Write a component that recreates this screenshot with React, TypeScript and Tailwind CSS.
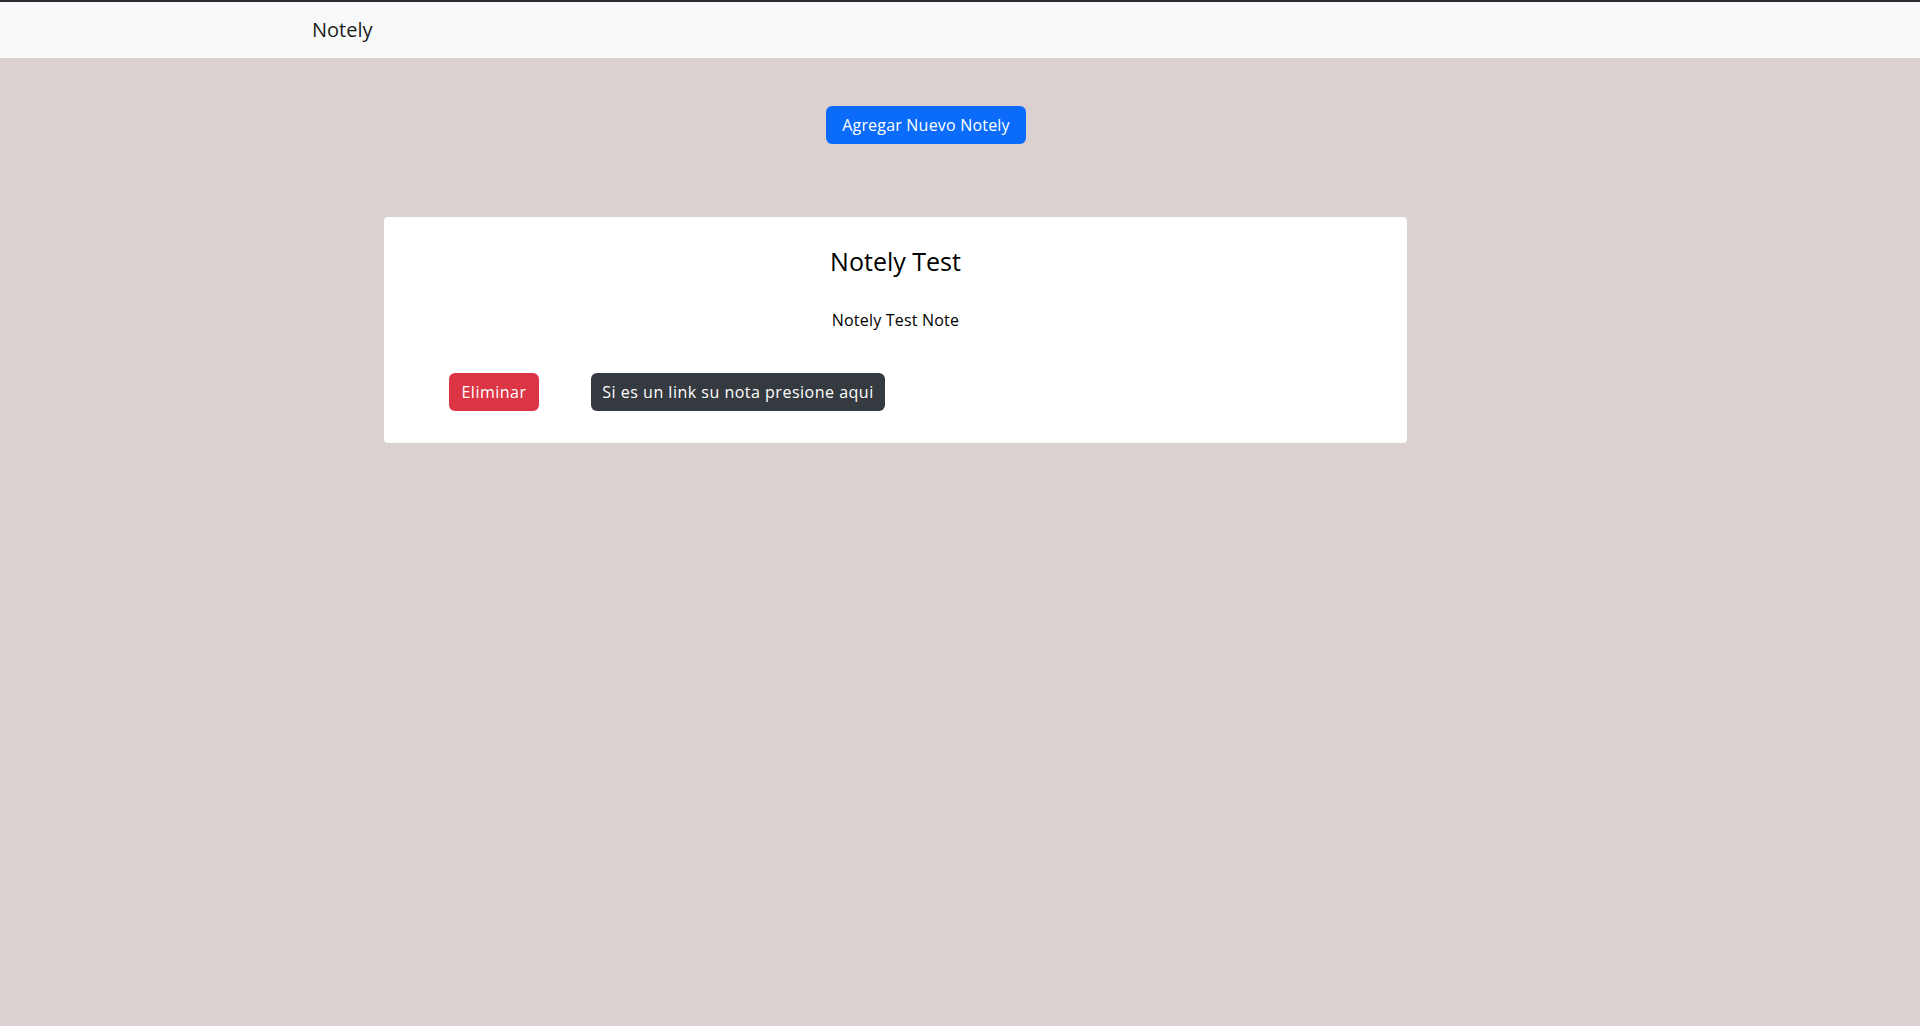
import React from 'react';

const font = { fontFamily: '"Open Sans", "Liberation Sans", sans-serif' };

const App: React.FC = () => {
  return (
    <div className="min-h-[1026px] bg-[#dad1d0] text-black" style={font}>
      {/* Navbar */}
      <header className="border-t-2 border-[#2a2b30] bg-[#f8f9fa]">
        <div className="w-[1320px] mx-auto px-3 h-14 flex items-center">
          <span className="text-xl text-[#1b1b1b]">Notely</span>
        </div>
      </header>

      <main className="w-[1320px] mx-auto">
        {/* Add button */}
        <div className="pt-12 pl-[526px]">
          <button className="h-[38px] w-[200px] rounded-md bg-[#0b6cfb] text-white text-base tracking-[0.2px]">
            Agregar Nuevo Notely
          </button>
        </div>

        {/* Note card */}
        <div className="mt-[73px] ml-[84px] w-[1023px] bg-white rounded pt-[30px] pb-8">
          <h4 className="text-center text-[25px] leading-[29px]">Notely Test</h4>
          <p className="mt-8 text-center text-base leading-6 tracking-[0.2px]">Notely Test Note</p>
          <div className="mt-[41px] pl-[65px] flex items-center gap-[52px]">
            <button className="shrink-0 h-[38px] w-[90px] rounded-md bg-[#dc3545] text-white text-base tracking-[0.5px]">
              Eliminar
            </button>
            <button className="shrink-0 h-[38px] w-[294px] rounded-md bg-[#353a40] text-white text-base tracking-[0.5px]">
              Si es un link su nota presione aqui
            </button>
          </div>
        </div>
      </main>
    </div>
  );
};

export default App;
